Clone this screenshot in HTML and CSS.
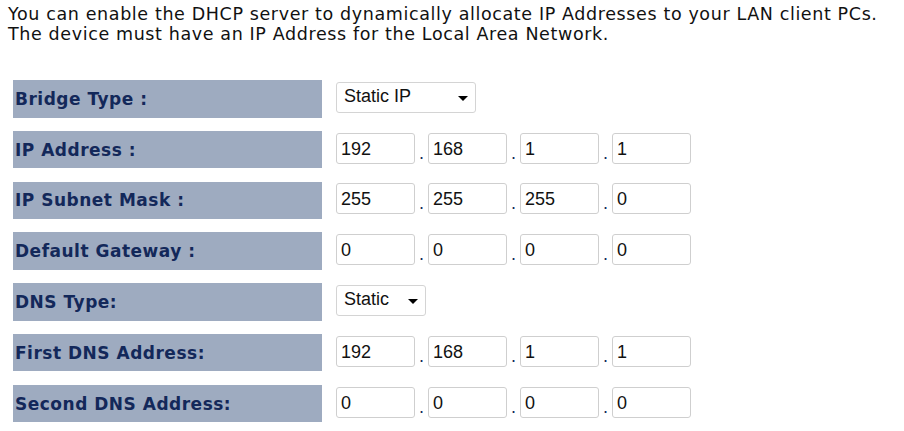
FILE: index.html
```html
<!DOCTYPE html>
<html lang="en">
<head>
    <meta charset="UTF-8">
    <title>LAN Setup</title>
    <link rel="stylesheet" href="styles.css">
</head>
<body>

<p class="intro">You can enable the DHCP server to dynamically allocate IP Addresses to your LAN client PCs.<br>
The device must have an IP Address for the Local Area Network.</p>

<div class="form">
    <div class="row">
        <div class="label">Bridge Type :</div>
        <div class="field">
            <div class="select wide">Static IP<span class="arrow"></span></div>
        </div>
    </div>
    <div class="row">
        <div class="label">IP Address :</div>
        <div class="field">
            <input class="ip" type="text" value="192"><span class="dot">.</span><input class="ip" type="text" value="168"><span class="dot">.</span><input class="ip" type="text" value="1"><span class="dot">.</span><input class="ip" type="text" value="1">
        </div>
    </div>
    <div class="row">
        <div class="label">IP Subnet Mask :</div>
        <div class="field">
            <input class="ip" type="text" value="255"><span class="dot">.</span><input class="ip" type="text" value="255"><span class="dot">.</span><input class="ip" type="text" value="255"><span class="dot">.</span><input class="ip" type="text" value="0">
        </div>
    </div>
    <div class="row">
        <div class="label">Default Gateway :</div>
        <div class="field">
            <input class="ip" type="text" value="0"><span class="dot">.</span><input class="ip" type="text" value="0"><span class="dot">.</span><input class="ip" type="text" value="0"><span class="dot">.</span><input class="ip" type="text" value="0">
        </div>
    </div>
    <div class="row">
        <div class="label">DNS Type:</div>
        <div class="field">
            <div class="select">Static<span class="arrow"></span></div>
        </div>
    </div>
    <div class="row">
        <div class="label">First DNS Address:</div>
        <div class="field">
            <input class="ip" type="text" value="192"><span class="dot">.</span><input class="ip" type="text" value="168"><span class="dot">.</span><input class="ip" type="text" value="1"><span class="dot">.</span><input class="ip" type="text" value="1">
        </div>
    </div>
    <div class="row">
        <div class="label">Second DNS Address:</div>
        <div class="field">
            <input class="ip" type="text" value="0"><span class="dot">.</span><input class="ip" type="text" value="0"><span class="dot">.</span><input class="ip" type="text" value="0"><span class="dot">.</span><input class="ip" type="text" value="0">
        </div>
    </div>
</div>

</body>
</html>
```

FILE: styles.css
```css
body {
    font-family: "DejaVu Sans", Verdana, sans-serif;
    background-color: #fff;
    color: #000;
    margin: 0;
    padding: 0;
}
.intro {
    margin: 0;
    padding: 4px 0 0 8px;
    font-size: 17.5px;
    letter-spacing: 0.62px;
    line-height: 20px;
    color: #111;
}
.form {
    margin: 36px 0 0 13px;
}
.row {
    display: flex;
    align-items: center;
    height: 37.5px;
    margin-bottom: 13.3px;
}
.label {
    width: 309px;
    height: 100%;
    display: flex;
    align-items: center;
    padding-left: 2px;
    box-sizing: border-box;
    background-color: #9eabc0;
    color: #13285a;
    font-weight: bold;
    font-size: 17px;
    letter-spacing: 0.5px;
}
.field {
    display: flex;
    height: 31px;
    margin-left: 14px;
    margin-top: -3px;
}
.ip {
    width: 79px;
    height: 31px;
    box-sizing: border-box;
    border: 1px solid #cfcfcf;
    border-radius: 3px;
    padding: 2px 4px 0;
    font-family: "Liberation Sans", Arial, sans-serif;
    font-size: 18px;
    color: #111;
    margin: 0;
}
.dot {
    width: 13px;
    align-self: flex-end;
    text-align: center;
    font-family: "Liberation Sans", Arial, sans-serif;
    font-size: 18px;
    line-height: 14px;
    padding-bottom: 4px;
    color: #13285a;
}
.select {
    position: relative;
    width: 90px;
    height: 31px;
    box-sizing: border-box;
    border: 1px solid #d4d4d4;
    border-radius: 3px;
    padding: 3px 0 0 7px;
    font-family: "Liberation Sans", Arial, sans-serif;
    font-size: 18px;
    color: #111;
}
.select.wide {
    width: 140px;
}
.arrow {
    position: absolute;
    right: 7px;
    top: 13px;
    width: 0;
    height: 0;
    border-left: 5px solid transparent;
    border-right: 5px solid transparent;
    border-top: 5px solid #000;
}
```
